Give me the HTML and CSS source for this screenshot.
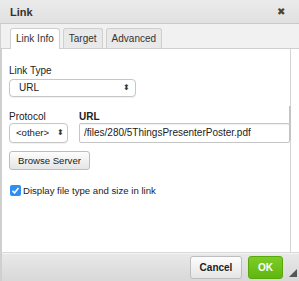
FILE: index.html
```html
<!DOCTYPE html>
<html lang="en">
<head>
    <meta charset="UTF-8">
    <title>Link</title>
    <link rel="stylesheet" href="styles.css">
</head>
<body>

    <div class="dialog">
        <div class="titlebar">
            <span class="title">Link</span>
            <span class="close">&#x2716;</span>
        </div>

        <div class="tabs">
            <div class="tab active">Link Info</div>
            <div class="tab">Target</div>
            <div class="tab">Advanced</div>
        </div>

        <div class="content">
            <div class="pane">
                <label class="label">Link Type</label>
                <div class="select wide">URL <span class="arrows">&#x2B0D;</span></div>

                <div class="row">
                    <div class="field">
                        <label class="label">Protocol</label>
                        <div class="select small">&lt;other&gt; <span class="arrows">&#x2B0D;</span></div>
                    </div>
                    <div class="field grow">
                        <label class="label bold">URL</label>
                        <div class="input">/files/280/5ThingsPresenterPoster.pdf</div>
                    </div>
                </div>

                <button class="btn browse">Browse Server</button>

                <div class="check-row">
                    <span class="checkbox">
                        <svg width="9" height="9" viewBox="0 0 9 9"><path d="M1.5 4.8 L3.6 6.8 L7.5 2" fill="none" stroke="#fff" stroke-width="1.6"/></svg>
                    </span>
                    <span class="check-label">Display file type and size in link</span>
                </div>
            </div>
            <div class="scrollbar"><div class="thumb"></div></div>
        </div>

        <div class="footer">
            <button class="btn cancel">Cancel</button>
            <button class="btn ok">OK</button>
            <span class="resize"></span>
        </div>
    </div>

</body>
</html>
```

FILE: styles.css
```css
body {
    margin: 0;
    font-family: "Liberation Sans", Arial, sans-serif;
    font-size: 10px;
    color: #222;
    background: #fff;
}
.dialog {
    width: 299px;
    height: 281px;
    display: flex;
    flex-direction: column;
    overflow: hidden;
}
.titlebar {
    height: 23px;
    display: flex;
    align-items: center;
    justify-content: space-between;
    padding: 0 14px 0 10px;
    background: linear-gradient(#ebebeb, #e0e0e0);
    border-bottom: 1px solid #c9c9c9;
}
.title {
    font-size: 11px;
    font-weight: bold;
    color: #333;
}
.close {
    font-size: 10px;
    color: #444;
}
.tabs {
    display: flex;
    gap: 3px;
    padding: 4px 0 0 9px;
    background: #f1f1f1;
    border-bottom: 1px solid #cfcfcf;
    border-left: 1px solid #d0d0d0;
}
.tab {
    height: 19px;
    line-height: 19px;
    padding: 0 5px;
    background: #e9e9e9;
    border: 1px solid #cfcfcf;
    border-bottom: none;
    border-radius: 3px 3px 0 0;
    color: #333;
    margin-bottom: -1px;
}
.tab.active {
    background: #fff;
    height: 20px;
}
.content {
    flex: 1;
    display: flex;
    border-left: 2px solid #cfcfcf;
    background: #fff;
}
.pane {
    flex: 1;
    padding: 16px 0 0 7px;
}
.scrollbar {
    width: 8px;
    border-left: 1px solid #d4d4d4;
}
.thumb {
    width: 2px;
    height: 34px;
    margin-top: 57px;
    margin-left: -2px;
    background: #c4c4c4;
}
.label {
    display: block;
    line-height: 12px;
    color: #222;
}
.bold {
    font-weight: bold;
}
.select {
    height: 16px;
    line-height: 16px;
    margin-top: 2px;
    padding: 0 5px 0 9px;
    border: 1px solid #c6c6c6;
    border-radius: 4px;
    background: #fff;
    display: flex;
    justify-content: space-between;
    align-items: center;
    box-shadow: 0 1px 1px rgba(0, 0, 0, 0.06);
}
.select.wide {
    width: 111px;
}
.select.small {
    width: 48px;
    height: 18px;
    margin-top: 0;
    padding-left: 6px;
    padding-right: 3px;
    font-size: 9.6px;
}
.arrows {
    font-size: 8px;
    color: #333;
}
.row {
    display: flex;
    gap: 11px;
    margin-top: 14px;
}
.field.grow {
    flex: 1;
}
.input {
    height: 18px;
    line-height: 18px;
    padding: 0 4px;
    border: 1px solid #c6c6c6;
    border-radius: 2px;
    box-shadow: inset 0 1px 1px rgba(0, 0, 0, 0.06);
    white-space: nowrap;
    overflow: hidden;
}
.btn {
    font-family: "Liberation Sans", Arial, sans-serif;
    font-size: 10px;
    border: 1px solid #bdbdbd;
    border-radius: 3px;
    background: linear-gradient(#fdfdfd, #e5e5e5);
    color: #222;
    padding: 0 8px;
}
.browse {
    display: block;
    height: 19px;
    margin-top: 8px;
    padding: 0 6px;
    width: 81px;
    font-size: 9.6px;
}
.check-row {
    display: flex;
    align-items: center;
    gap: 2px;
    margin-top: 15px;
    margin-left: 1px;
}
.check-label {
    font-size: 9.6px;
}
.checkbox {
    width: 11px;
    height: 11px;
    border-radius: 2px;
    background: #2f8ef2;
    display: flex;
    align-items: center;
    justify-content: center;
}
.footer {
    height: 28px;
    display: flex;
    align-items: center;
    justify-content: flex-end;
    gap: 6px;
    padding: 0 16px 0 0;
    border-top: 1px solid #d8d8d8;
    box-shadow: inset 0 1px 0 #f4f4f4;
    border-left: 2px solid #cfcfcf;
    background: linear-gradient(#e9e9e9, #d8d8d8);
    position: relative;
}
.footer .btn {
    height: 23px;
    font-weight: bold;
}
.cancel {
    width: 52px;
}
.ok {
    width: 35px;
    background: linear-gradient(#7dcc25, #60b612);
    border-color: #57a80e;
    color: #fff;
}
.resize {
    position: absolute;
    right: 2px;
    bottom: 4px;
    width: 0;
    height: 0;
    border-left: 8px solid transparent;
    border-bottom: 8px solid #555;
}
```
